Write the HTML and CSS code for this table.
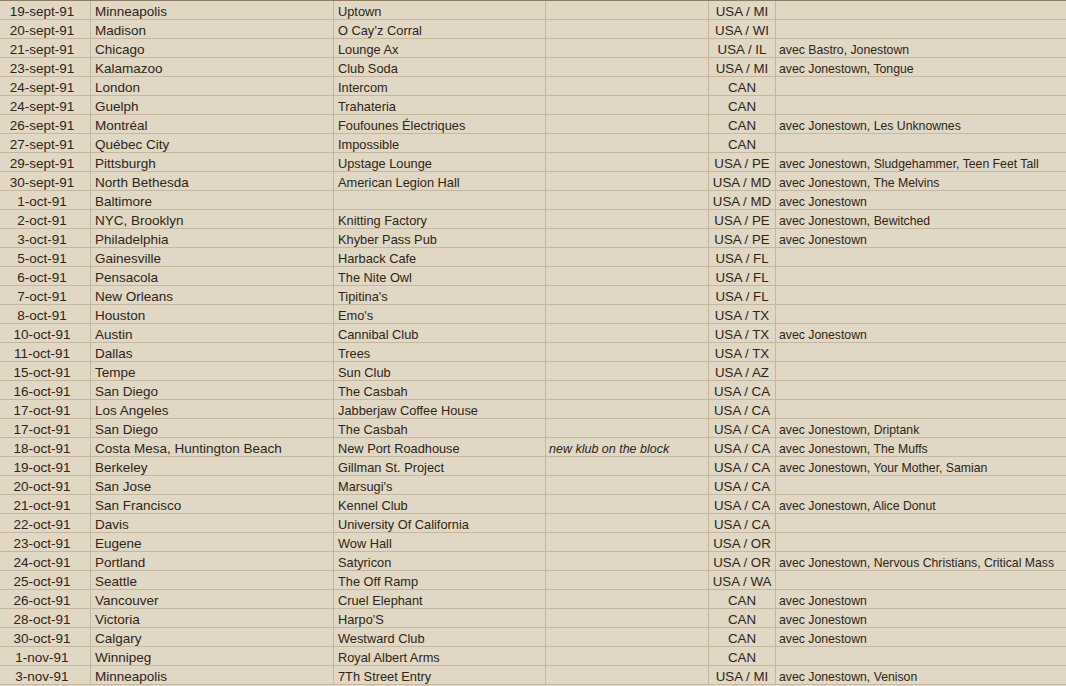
FILE: index.html
```html
<!DOCTYPE html>
<html lang="fr">
<head>
<meta charset="utf-8">
<title>Tournée 1991</title>
<link rel="stylesheet" href="styles.css">
</head>
<body>
<table class="sheet">
<colgroup>
<col class="c-date"><col class="c-city"><col class="c-venue"><col class="c-note"><col class="c-country"><col class="c-bands">
</colgroup>
<tbody>
<tr><td class="date">19-sept-91</td><td class="city">Minneapolis</td><td class="venue">Uptown</td><td class="note"></td><td class="country">USA / MI</td><td class="bands"></td></tr>
<tr><td class="date">20-sept-91</td><td class="city">Madison</td><td class="venue">O Cay’z Corral</td><td class="note"></td><td class="country">USA / WI</td><td class="bands"></td></tr>
<tr><td class="date">21-sept-91</td><td class="city">Chicago</td><td class="venue">Lounge Ax</td><td class="note"></td><td class="country">USA / IL</td><td class="bands">avec Bastro, Jonestown</td></tr>
<tr><td class="date">23-sept-91</td><td class="city">Kalamazoo</td><td class="venue">Club Soda</td><td class="note"></td><td class="country">USA / MI</td><td class="bands">avec Jonestown, Tongue</td></tr>
<tr><td class="date">24-sept-91</td><td class="city">London</td><td class="venue">Intercom</td><td class="note"></td><td class="country">CAN</td><td class="bands"></td></tr>
<tr><td class="date">24-sept-91</td><td class="city">Guelph</td><td class="venue">Trahateria</td><td class="note"></td><td class="country">CAN</td><td class="bands"></td></tr>
<tr><td class="date">26-sept-91</td><td class="city">Montréal</td><td class="venue">Foufounes Électriques</td><td class="note"></td><td class="country">CAN</td><td class="bands">avec Jonestown, Les Unknownes</td></tr>
<tr><td class="date">27-sept-91</td><td class="city">Québec City</td><td class="venue">Impossible</td><td class="note"></td><td class="country">CAN</td><td class="bands"></td></tr>
<tr><td class="date">29-sept-91</td><td class="city">Pittsburgh</td><td class="venue">Upstage Lounge</td><td class="note"></td><td class="country">USA / PE</td><td class="bands">avec Jonestown, Sludgehammer, Teen Feet Tall</td></tr>
<tr><td class="date">30-sept-91</td><td class="city">North Bethesda</td><td class="venue">American Legion Hall</td><td class="note"></td><td class="country">USA / MD</td><td class="bands">avec Jonestown, The Melvins</td></tr>
<tr><td class="date">1-oct-91</td><td class="city">Baltimore</td><td class="venue"></td><td class="note"></td><td class="country">USA / MD</td><td class="bands">avec Jonestown</td></tr>
<tr><td class="date">2-oct-91</td><td class="city">NYC, Brooklyn</td><td class="venue">Knitting Factory</td><td class="note"></td><td class="country">USA / PE</td><td class="bands">avec Jonestown, Bewitched</td></tr>
<tr><td class="date">3-oct-91</td><td class="city">Philadelphia</td><td class="venue">Khyber Pass Pub</td><td class="note"></td><td class="country">USA / PE</td><td class="bands">avec Jonestown</td></tr>
<tr><td class="date">5-oct-91</td><td class="city">Gainesville</td><td class="venue">Harback Cafe</td><td class="note"></td><td class="country">USA / FL</td><td class="bands"></td></tr>
<tr><td class="date">6-oct-91</td><td class="city">Pensacola</td><td class="venue">The Nite Owl</td><td class="note"></td><td class="country">USA / FL</td><td class="bands"></td></tr>
<tr><td class="date">7-oct-91</td><td class="city">New Orleans</td><td class="venue">Tipitina's</td><td class="note"></td><td class="country">USA / FL</td><td class="bands"></td></tr>
<tr><td class="date">8-oct-91</td><td class="city">Houston</td><td class="venue">Emo's</td><td class="note"></td><td class="country">USA / TX</td><td class="bands"></td></tr>
<tr><td class="date">10-oct-91</td><td class="city">Austin</td><td class="venue">Cannibal Club</td><td class="note"></td><td class="country">USA / TX</td><td class="bands">avec Jonestown</td></tr>
<tr><td class="date">11-oct-91</td><td class="city">Dallas</td><td class="venue">Trees</td><td class="note"></td><td class="country">USA / TX</td><td class="bands"></td></tr>
<tr><td class="date">15-oct-91</td><td class="city">Tempe</td><td class="venue">Sun Club</td><td class="note"></td><td class="country">USA / AZ</td><td class="bands"></td></tr>
<tr><td class="date">16-oct-91</td><td class="city">San Diego</td><td class="venue">The Casbah</td><td class="note"></td><td class="country">USA / CA</td><td class="bands"></td></tr>
<tr><td class="date">17-oct-91</td><td class="city">Los Angeles</td><td class="venue">Jabberjaw Coffee House</td><td class="note"></td><td class="country">USA / CA</td><td class="bands"></td></tr>
<tr><td class="date">17-oct-91</td><td class="city">San Diego</td><td class="venue">The Casbah</td><td class="note"></td><td class="country">USA / CA</td><td class="bands">avec Jonestown, Driptank</td></tr>
<tr><td class="date">18-oct-91</td><td class="city">Costa Mesa, Huntington Beach</td><td class="venue">New Port Roadhouse</td><td class="note">new klub on the block</td><td class="country">USA / CA</td><td class="bands">avec Jonestown, The Muffs</td></tr>
<tr><td class="date">19-oct-91</td><td class="city">Berkeley</td><td class="venue">Gillman St. Project</td><td class="note"></td><td class="country">USA / CA</td><td class="bands">avec Jonestown, Your Mother, Samian</td></tr>
<tr><td class="date">20-oct-91</td><td class="city">San Jose</td><td class="venue">Marsugi's</td><td class="note"></td><td class="country">USA / CA</td><td class="bands"></td></tr>
<tr><td class="date">21-oct-91</td><td class="city">San Francisco</td><td class="venue">Kennel Club</td><td class="note"></td><td class="country">USA / CA</td><td class="bands">avec Jonestown, Alice Donut</td></tr>
<tr><td class="date">22-oct-91</td><td class="city">Davis</td><td class="venue">University Of California</td><td class="note"></td><td class="country">USA / CA</td><td class="bands"></td></tr>
<tr><td class="date">23-oct-91</td><td class="city">Eugene</td><td class="venue">Wow Hall</td><td class="note"></td><td class="country">USA / OR</td><td class="bands"></td></tr>
<tr><td class="date">24-oct-91</td><td class="city">Portland</td><td class="venue">Satyricon</td><td class="note"></td><td class="country">USA / OR</td><td class="bands">avec Jonestown, Nervous Christians, Critical Mass</td></tr>
<tr><td class="date">25-oct-91</td><td class="city">Seattle</td><td class="venue">The Off Ramp</td><td class="note"></td><td class="country">USA / WA</td><td class="bands"></td></tr>
<tr><td class="date">26-oct-91</td><td class="city">Vancouver</td><td class="venue">Cruel Elephant</td><td class="note"></td><td class="country">CAN</td><td class="bands">avec Jonestown</td></tr>
<tr><td class="date">28-oct-91</td><td class="city">Victoria</td><td class="venue">Harpo'S</td><td class="note"></td><td class="country">CAN</td><td class="bands">avec Jonestown</td></tr>
<tr><td class="date">30-oct-91</td><td class="city">Calgary</td><td class="venue">Westward Club</td><td class="note"></td><td class="country">CAN</td><td class="bands">avec Jonestown</td></tr>
<tr><td class="date">1-nov-91</td><td class="city">Winnipeg</td><td class="venue">Royal Albert Arms</td><td class="note"></td><td class="country">CAN</td><td class="bands"></td></tr>
<tr><td class="date">3-nov-91</td><td class="city">Minneapolis</td><td class="venue">7Th Street Entry</td><td class="note"></td><td class="country">USA / MI</td><td class="bands">avec Jonestown, Venison</td></tr>
</tbody>
</table>
</body>
</html>
```
FILE: styles.css
```css
html, body {
  margin: 0;
  padding: 0;
  background: #e0d7c4;
}
body {
  font-family: "Liberation Sans", Arial, sans-serif;
  color: #2e2517;
  overflow: hidden;
}
.sheet {
  border-collapse: separate;
  border-spacing: 0;
  table-layout: fixed;
  width: 1066px;
  border-top: 1px solid #8c7c62;
}
.c-date { width: 91px; }
.c-city { width: 243px; }
.c-venue { width: 212px; }
.c-note { width: 163px; }
.c-country { width: 67px; }
.c-bands { width: 290px; }
.sheet td {
  box-sizing: border-box;
  height: 19px;
  padding: 3px 0 0 4px;
  border-right: 1px solid #c5b89f;
  border-bottom: 1px solid #c5b89f;
  line-height: 15px;
  white-space: nowrap;
  overflow: hidden;
  font-size: 13.5px;
  vertical-align: top;
}
.sheet td.bands { border-right: none; }
.sheet td.date {
  text-align: center;
  padding: 3px 6px 0 0;
}
.sheet td.venue { font-size: 12.8px; }
.sheet td.note {
  font-size: 12.5px;
  font-style: italic;
  padding: 4px 0 0 3px;
  line-height: 14px;
}
.sheet td.country {
  text-align: center;
  padding: 3px 0 0 0;
  font-size: 13.3px;
}
.sheet td.bands {
  font-size: 12.25px;
  padding: 4px 0 0 3px;
  line-height: 14px;
}
```
